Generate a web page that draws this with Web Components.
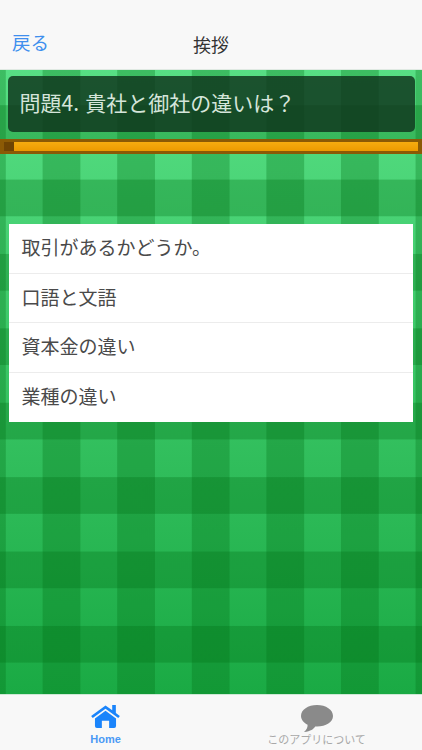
<!DOCTYPE html>
<html lang="ja">
<head>
<meta charset="utf-8">
<title>挨拶</title>
<style>
  html, body { margin: 0; height: 100%; }
  body { font-family: "Noto Sans CJK JP", "Liberation Sans", sans-serif; }
</style>
</head>
<body>
<quiz-app>
  <nav-bar slot="nav" back="戻る">挨拶</nav-bar>
  <question-panel slot="question">問題4. 貴社と御社の違いは？</question-panel>
  <progress-strip slot="progress"></progress-strip>
  <answer-list slot="answers">
    <answer-row>取引があるかどうか。</answer-row>
    <answer-row>口語と文語</answer-row>
    <answer-row>資本金の違い</answer-row>
    <answer-row>業種の違い</answer-row>
  </answer-list>
  <tab-bar slot="tabs">
    <tab-item label="Home" active>
      <svg viewBox="0 0 30 24" width="29" height="23" fill="currentColor">
        <path d="M15 0.500 L22 5.600 V0 H25.800 V8.400 L30 11.500 L28.300 13.600 L15 4 L1.700 13.600 L0 11.500 Z"/>
        <path d="M15 6 L26 14 V22 Q26 24 24 24 H18.800 V16.500 H11.200 V24 H6 Q4 24 4 22 V14 Z"/>
      </svg>
    </tab-item>
    <tab-item label="このアプリについて">
      <svg viewBox="0 0 32 27" width="32" height="27" fill="currentColor">
        <path d="M16 0 C25 0 32 4.700 32 11 C32 17 25 21.500 16 21.500 C15.400 21.500 14.800 21.500 14.200 21.400 C12.500 24 10 26 3 27 C5.800 24.800 6.600 22.500 6.600 19.800 C2.600 17.800 0 14.600 0 11 C0 4.700 7 0 16 0 Z"/>
      </svg>
    </tab-item>
  </tab-bar>
</quiz-app>

<script>
// 全体のレイアウト
class QuizApp extends HTMLElement {
    constructor() {
        super();
        this.attachShadow({ mode: 'open' });
    }

    connectedCallback() {
        this.shadowRoot.innerHTML = `
            <style>
                :host {
                    display: flex;
                    flex-direction: column;
                    width: 422px;
                    height: 750px;
                    overflow: hidden;
                }

                .board {
                    flex: 1;
                    display: flex;
                    flex-direction: column;
                    padding-top: 5.500px;
                    /* チェック柄: 列の影 + 行の影 + 上から下へのグラデーション */
                    background-color: #1aaa44;
                    background-image:
                        linear-gradient(90deg, rgba(0, 110, 20, .3) 50%, transparent 50%),
                        linear-gradient(180deg, rgba(0, 110, 20, .3) 50%, transparent 50%),
                        linear-gradient(180deg, #57df84 0%, #1aaa44 100%);
                    background-size: 74.6px 74.4px, 74.6px 74.4px, 100% 100%;
                    background-position: 42.6px 0, 0 35.2px, 0 0;
                }
            </style>
            <slot name="nav"></slot>
            <div class="board">
                <slot name="question"></slot>
                <slot name="progress"></slot>
                <slot name="answers"></slot>
            </div>
            <slot name="tabs"></slot>
        `;
    }
}

// ナビゲーションバー
class NavBar extends HTMLElement {
    constructor() {
        super();
        this.attachShadow({ mode: 'open' });
    }

    connectedCallback() {
        this.shadowRoot.innerHTML = `
            <style>
                :host {
                    display: grid;
                    grid-template-columns: 1fr auto 1fr;
                    align-items: center;
                    height: 51px;
                    padding-top: 18px;
                    background: #f8f8f8;
                    border-bottom: 1px solid #dfe9e2;
                    font-size: 18px;
                    color: #333;
                }

                .back {
                    padding-left: 12px;
                    padding-bottom: 3px;
                    font-size: 18.500px;
                    color: #3f8fee;
                }
            </style>
            <span class="back">${this.getAttribute('back')}</span>
            <span><slot></slot></span>
            <span></span>
        `;
    }
}

// 問題文
class QuestionPanel extends HTMLElement {
    constructor() {
        super();
        this.attachShadow({ mode: 'open' });
    }

    connectedCallback() {
        this.shadowRoot.innerHTML = `
            <style>
                :host {
                    display: flex;
                    align-items: center;
                    height: 56px;
                    box-sizing: border-box;
                    margin: 0 7.500px;
                    padding: 0 12px 3px;
                    border-radius: 5px;
                    background: rgba(15, 55, 30, .84);
                    font-size: 21px;
                    word-spacing: 1.500px;
                    color: #d5e5da;
                }
            </style>
            <slot></slot>
        `;
    }
}

// 残り時間のバー
class ProgressStrip extends HTMLElement {
    constructor() {
        super();
        this.attachShadow({ mode: 'open' });
    }

    connectedCallback() {
        this.shadowRoot.innerHTML = `
            <style>
                :host {
                    display: flex;
                    height: 9px;
                    margin-top: 7px;
                    border: 3px solid #8b5a05;
                    border-width: 3px 4px;
                    background: linear-gradient(#f6ac10, #ec9a00);
                }

                .used {
                    width: 10px;
                    background: #6f4403;
                }
            </style>
            <div class="used"></div>
        `;
    }
}

// 回答の一覧
class AnswerList extends HTMLElement {
    constructor() {
        super();
        this.attachShadow({ mode: 'open' });
    }

    connectedCallback() {
        this.shadowRoot.innerHTML = `
            <style>
                :host {
                    display: flex;
                    flex-direction: column;
                    margin: 70.500px 9px 0;
                    background: #fff;
                }
            </style>
            <slot></slot>
        `;
    }
}

class AnswerRow extends HTMLElement {
    constructor() {
        super();
        this.attachShadow({ mode: 'open' });
    }

    connectedCallback() {
        this.shadowRoot.innerHTML = `
            <style>
                :host {
                    display: flex;
                    align-items: center;
                    height: 49.500px;
                    box-sizing: border-box;
                    padding: 0 0 3px 12.500px;
                    border-bottom: 1px solid #ececec;
                    font-size: 19px;
                    color: #4a4a4a;
                }

                :host(:last-child) {
                    border-bottom: none;
                }
            </style>
            <slot></slot>
        `;
    }
}

// タブバー
class TabBar extends HTMLElement {
    constructor() {
        super();
        this.attachShadow({ mode: 'open' });
    }

    connectedCallback() {
        this.shadowRoot.innerHTML = `
            <style>
                :host {
                    display: grid;
                    grid-template-columns: 1fr 1fr;
                    height: 56px;
                    box-sizing: border-box;
                    background: #f8f8f8;
                    border-top: 1px solid #cfe8d6;
                }
            </style>
            <slot></slot>
        `;
    }
}

class TabItem extends HTMLElement {
    constructor() {
        super();
        this.attachShadow({ mode: 'open' });
    }

    connectedCallback() {
        this.shadowRoot.innerHTML = `
            <style>
                :host {
                    display: flex;
                    flex-direction: column;
                    align-items: center;
                    padding-top: 10px;
                    color: #8a8a8a;
                }

                :host([active]) {
                    color: #1a84fb;
                }

                .icon {
                    display: flex;
                    align-items: flex-start;
                    height: 27px;
                }

                .label {
                    font-size: 11px;
                    line-height: 13px;
                    margin-top: 1px;
                    color: #a8a8a8;
                    white-space: nowrap;
                }

                :host([active]) .label {
                    color: #4a9af5;
                    font-family: "Liberation Sans", sans-serif;
                    font-weight: 700;
                }
            </style>
            <div class="icon"><slot></slot></div>
            <div class="label">${this.getAttribute('label')}</div>
        `;
    }
}

customElements.define('quiz-app', QuizApp);
customElements.define('nav-bar', NavBar);
customElements.define('question-panel', QuestionPanel);
customElements.define('progress-strip', ProgressStrip);
customElements.define('answer-list', AnswerList);
customElements.define('answer-row', AnswerRow);
customElements.define('tab-bar', TabBar);
customElements.define('tab-item', TabItem);
</script>
</body>
</html>
